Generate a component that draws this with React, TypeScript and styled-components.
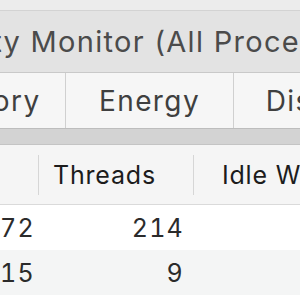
import React from 'react';
import styled, { createGlobalStyle } from 'styled-components';

const GlobalStyle = createGlobalStyle`
  html, body {
    margin: 0;
    padding: 0;
    background: #ffffff;
  }
  body {
    font-family: Inter, "Liberation Sans", sans-serif;
  }
`;

const Window = styled.div`
  width: 300px;
  height: 300px;
  overflow: hidden;
  display: flex;
  flex-direction: column;
  background: #ffffff;
`;

const TopStrip = styled.div`
  height: 10px;
  flex-shrink: 0;
  background: #ececec;
  border-bottom: 1px solid #d3d3d3;
`;

const TitleBar = styled.div`
  height: 61px;
  flex-shrink: 0;
  display: flex;
  align-items: center;
  background: #e3e3e3;
  border-bottom: 1px solid #c9c9c9;
  white-space: nowrap;
`;

const TitleText = styled.span`
  margin-left: -92px;
  font-size: 29px;
  color: #4b4b4b;
  letter-spacing: 1.3px;
`;

const Tabs = styled.div`
  height: 55px;
  flex-shrink: 0;
  display: flex;
  margin-left: -102px;
  background: #f6f6f6;
  border-bottom: 1px solid #bdbdbd;
`;

const Tab = styled.div<{ $first?: boolean; $w?: number }>`
  width: ${p => p.$w ?? 167}px;
  flex-shrink: 0;
  display: flex;
  align-items: center;
  justify-content: center;
  border-left: ${p => (p.$first ? 'none' : '1px solid #d0d0d0')};
  font-size: 28px;
  letter-spacing: 1.4px;
  color: #3f3f3f;
`;

const Band = styled.div`
  height: 15px;
  flex-shrink: 0;
  background: #d3d3d3;
  border-bottom: 1px solid #c4c4c4;
`;

const HeaderRow = styled.div`
  height: 59px;
  flex-shrink: 0;
  display: flex;
  align-items: center;
  background: #f5f5f5;
  border-bottom: 1px solid #dadada;
`;

const HeadCell = styled.div<{ $w: number; $pad: number; $divider?: boolean }>`
  width: ${p => p.$w}px;
  flex-shrink: 0;
  height: 40px;
  display: flex;
  align-items: center;
  padding-left: ${p => p.$pad}px;
  box-sizing: border-box;
  border-left: ${p => (p.$divider ? '1px solid #d6d6d6' : 'none')};
  font-size: 25px;
  letter-spacing: 0.8px;
  color: #1c1c1c;
  white-space: nowrap;
`;

const Row = styled.div<{ $alt?: boolean }>`
  height: 45px;
  flex-shrink: 0;
  display: flex;
  align-items: center;
  background: ${p => (p.$alt ? '#f4f5f5' : '#ffffff')};
`;

const NumCell = styled.div<{ $w: number; $pad: number }>`
  width: ${p => p.$w}px;
  flex-shrink: 0;
  box-sizing: border-box;
  padding-right: ${p => p.$pad}px;
  text-align: right;
  font-size: 25px;
  letter-spacing: 1.2px;
  color: #2b2b2b;
  font-variant-numeric: tabular-nums;
`;

const rows = [
  { ports: '72', threads: '214' },
  { ports: '15', threads: '9' },
  { ports: '', threads: '' },
];

export default function App() {
  return (
    <>
      <GlobalStyle />
      <Window>
        <TopStrip />
        <TitleBar>
          <TitleText>Activity Monitor (All Processes)</TitleText>
        </TitleBar>
        <Tabs>
          <Tab $first>Memory</Tab>
          <Tab>Energy</Tab>
          <Tab $w={126}>Disk</Tab>
        </Tabs>
        <Band />
        <HeaderRow>
          <HeadCell $w={38} $pad={0} />
          <HeadCell $w={155} $pad={14} $divider>Threads</HeadCell>
          <HeadCell $w={200} $pad={28} $divider>Idle Wake Ups</HeadCell>
        </HeaderRow>
        {rows.map((r, i) => (
          <Row key={i} $alt={i % 2 === 1}>
            <NumCell $w={38} $pad={9}>{r.ports}</NumCell>
            <NumCell $w={155} $pad={9}>{r.threads}</NumCell>
          </Row>
        ))}
      </Window>
    </>
  );
}
